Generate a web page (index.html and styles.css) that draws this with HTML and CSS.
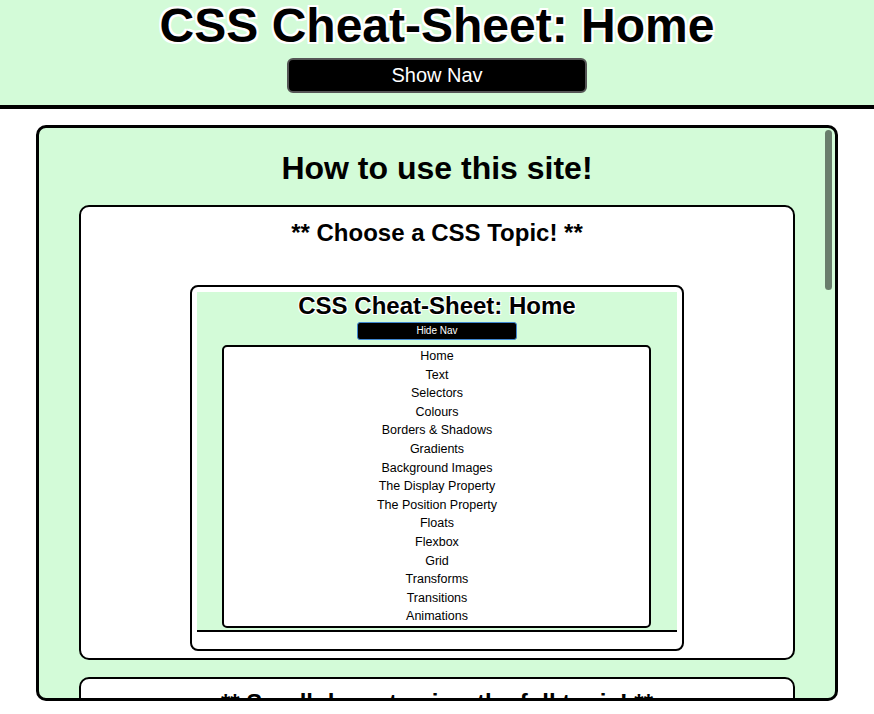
FILE: index.html
```html
<!DOCTYPE html>
<html lang="en">
<head>
  <meta charset="UTF-8" />
  <meta name="viewport" content="width=device-width, initial-scale=1" />
  <title>CSS Cheat-Sheet: Home</title>
  <link rel="stylesheet" href="styles.css">
</head>
<body>
  <header class="site-header">
    <h1 class="site-title">CSS Cheat-Sheet: Home</h1>
    <button class="nav-toggle">Show Nav</button>
  </header>

  <main class="panel">
    <div class="panel-scroll">
      <h2 class="panel-title">How to use this site!</h2>

      <section class="card">
        <h3 class="card-title">** Choose a CSS Topic! **</h3>
        <!-- screenshot of the open nav -->
        <div class="shot">
          <div class="mini-header">
            <div class="mini-title">CSS Cheat-Sheet: Home</div>
            <div class="mini-toggle">Hide Nav</div>
            <ul class="mini-nav">
              <li>Home</li>
              <li>Text</li>
              <li>Selectors</li>
              <li>Colours</li>
              <li>Borders &amp; Shadows</li>
              <li>Gradients</li>
              <li>Background Images</li>
              <li>The Display Property</li>
              <li>The Position Property</li>
              <li>Floats</li>
              <li>Flexbox</li>
              <li>Grid</li>
              <li>Transforms</li>
              <li>Transitions</li>
              <li>Animations</li>
            </ul>
          </div>
          <div class="mini-gap"></div>
        </div>
      </section>

      <section class="card">
        <h3 class="card-title card-title-tight">** Scroll down to view the full topic! **</h3>
        <p class="card-text">Each topic page has notes and examples, from the basics down to the trickier properties.</p>
      </section>
    </div>
    <div class="thumb"></div>
  </main>
</body>
</html>
```

FILE: styles.css
```css
:root {
  --mint: #d3fbd8;
}
body {
  margin: 0;
  font-family: 'Liberation Sans', Arial, Helvetica, sans-serif;
  background: #fff;
  color: #000;
}
.site-header {
  background: var(--mint);
  border-bottom: 4px solid #000;
  padding: 2px 0 12px;
  display: flex;
  flex-direction: column;
  align-items: center;
}
.site-title {
  margin: 0;
  font-size: 48px;
  line-height: 48px;
  text-shadow: -2px -2px 0 #fff, 2px -2px 0 #fff, -2px 2px 0 #fff, 2px 2px 0 #fff,
    0 -2px 0 #fff, 0 2px 0 #fff, -2px 0 0 #fff, 2px 0 0 #fff;
}
.nav-toggle {
  margin-top: 8px;
  width: 300px;
  height: 35px;
  background: #000;
  color: #fff;
  border: 2px solid #555;
  border-radius: 6px;
  font-family: inherit;
  font-size: 20px;
}
.panel {
  position: relative;
  height: 576px;
  box-sizing: border-box;
  margin: 16px 36px 0;
  background: var(--mint);
  border: 3px solid #000;
  border-radius: 10px;
  overflow: hidden;
}
.panel-scroll {
  height: 100%;
  overflow-y: auto;
  scrollbar-width: none;
}
.thumb {
  position: absolute;
  top: 2px;
  right: 3px;
  width: 7px;
  height: 160px;
  border-radius: 4px;
  background: rgba(0, 0, 0, 0.5);
}
.panel-title {
  margin: 22px 0 18px;
  text-align: center;
  font-size: 32px;
}
.card {
  width: 90%;
  box-sizing: border-box;
  margin: 0 auto 17px;
  background: #fff;
  border: 2px solid #000;
  border-radius: 10px;
  display: flex;
  flex-direction: column;
  align-items: center;
}
.card-title {
  margin: 12px 0 0;
  font-size: 24px;
}
.card-title-tight {
  margin-top: 10px;
}
.card-text {
  font-size: 16px;
  margin: 16px 24px;
}
.shot {
  margin: 38px 0 7px;
  width: 494px;
  box-sizing: border-box;
  padding: 5px;
  border: 2px solid #000;
  border-radius: 8px;
}
.mini-header {
  background: var(--mint);
  border-bottom: 2px solid #000;
  padding: 2px 0 2px;
  display: flex;
  flex-direction: column;
  align-items: center;
}
.mini-title {
  font-size: 24px;
  font-weight: bold;
  line-height: 24px;
  text-shadow: -1px -1px 0 #fff, 1px -1px 0 #fff, -1px 1px 0 #fff, 1px 1px 0 #fff;
}
.mini-toggle {
  margin-top: 4px;
  width: 160px;
  height: 18px;
  box-sizing: border-box;
  background: #000;
  color: #fff;
  border: 1px solid #3f86d0;
  border-radius: 3px;
  font-size: 10px;
  line-height: 16px;
  text-align: center;
}
.mini-nav {
  list-style: none;
  margin: 5px 0 0;
  padding: 0;
  width: 429px;
  box-sizing: border-box;
  background: #fff;
  border: 2px solid #000;
  border-radius: 5px;
  text-align: center;
  font-size: 12.5px;
  line-height: 18.6px;
}
.mini-gap {
  height: 12px;
}
```
